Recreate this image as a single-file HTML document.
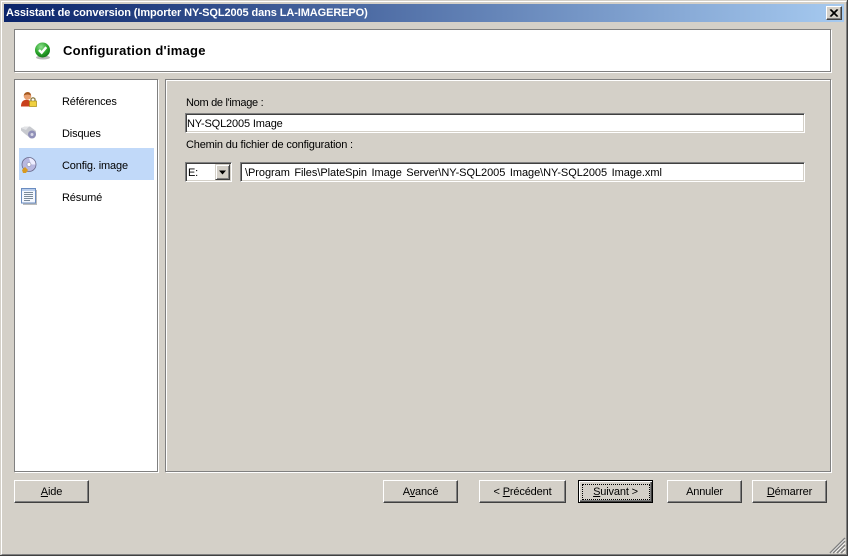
<!DOCTYPE html>
<html lang="fr"><head><meta charset="utf-8"><title>Assistant de conversion</title>
<style>
html,body{margin:0;padding:0;background:#d4d0c8}
#w{position:relative;width:848px;height:556px;overflow:hidden;background:#d4d0c8;font-family:"Liberation Sans",sans-serif;font-size:11px;letter-spacing:-.15px;color:#000}
#w div,#w span.t,#w svg{position:absolute}
.t{white-space:nowrap;line-height:14px}
.e1{border:1px solid #808080;box-sizing:border-box}
.e2{border:1px solid #fff;box-sizing:border-box}
.b{position:absolute;box-sizing:border-box;width:75px;height:23px;background:#d4d0c8;border-top:1px solid #fff;border-left:1px solid #fff;border-right:1px solid #404040;border-bottom:1px solid #404040;box-shadow:inset -1px -1px 0 #808080;text-align:center;line-height:22px;font-size:11px}
.f{box-sizing:border-box;background:#fff;border-top:1px solid #808080;border-left:1px solid #808080;border-right:1px solid #fff;border-bottom:1px solid #fff;box-shadow:inset 1px 1px 0 #404040,inset -1px -1px 0 #d4d0c8}
u{text-decoration:underline}
</style></head><body>
<div id="w">
<div style="left:0;top:0;width:848px;height:556px;box-sizing:border-box;border-right:1px solid #404040;border-bottom:1px solid #404040"></div>
<div style="left:1px;top:1px;width:846px;height:554px;box-sizing:border-box;border-top:1px solid #fff;border-left:1px solid #fff;border-right:1px solid #808080;border-bottom:1px solid #808080"></div>

<div style="left:4px;top:4px;width:840px;height:18px;background:linear-gradient(90deg,#0a246a,#a6caf0)"></div>
<span class="t" style="left:6px;top:6px;color:#fff;font-weight:bold;font-size:11px;letter-spacing:-.1px">Assistant de conversion (Importer NY-SQL2005 dans LA-IMAGEREPO)</span>
<div style="left:826px;top:6px;width:16px;height:14px;box-sizing:border-box;background:#d4d0c8;border-top:1px solid #fff;border-left:1px solid #fff;border-right:1px solid #404040;border-bottom:1px solid #404040;box-shadow:inset -1px -1px 0 #808080"></div>
<svg style="left:826px;top:6px" width="16" height="14"><path d="M4 3.500L11 10.500M5 3.500L12 10.500M11 3.500L4 10.500M12 3.500L5 10.500" stroke="#000" stroke-width="1" fill="none"/></svg>

<div class="e2" style="left:15px;top:30px;width:817px;height:43px"></div>
<div class="e1" style="left:14px;top:29px;width:817px;height:43px;background:#fff"></div>
<svg style="left:34px;top:42px" width="18" height="18" viewBox="0 0 18 18"><defs><radialGradient id="g" cx=".4" cy=".3" r=".8"><stop offset="0" stop-color="#8fe08f"/><stop offset=".55" stop-color="#2ba52b"/><stop offset="1" stop-color="#0c6a14"/></radialGradient></defs><ellipse cx="9" cy="15.500" rx="7" ry="2" fill="#bbb"/><circle cx="8.500" cy="8" r="7.500" fill="url(#g)"/><path d="M5 8L7.700 10.700L12.300 5.200" stroke="#fff" stroke-width="2.400" fill="none"/></svg>
<span class="t" style="left:63px;top:44px;font-weight:bold;font-size:13px;letter-spacing:.25px">Configuration d'image</span>

<div class="e2" style="left:15px;top:80px;width:144px;height:393px"></div>
<div class="e1" style="left:14px;top:79px;width:144px;height:393px;background:#fff"></div>
<div style="left:19px;top:148px;width:135px;height:32px;background:#c1d9f9"></div>

<svg style="left:20px;top:90px" width="18" height="18" viewBox="0 0 18 18"><circle cx="7.500" cy="6" r="3.800" fill="#e8a070"/><path d="M3.700 5.500Q4.500 2 8 2Q11 2.500 11 5.500Q7.500 3.500 3.700 5.500Z" fill="#a65a20"/><path d="M1 16.500Q1 10 6.500 9.800Q10 10 10.500 12V16.500Z" fill="#c8401c"/><rect x="9.500" y="11" width="7" height="5.500" fill="#f0d040" stroke="#a88a10" stroke-width=".7"/><path d="M11 11V9Q13 6.500 15 9V11" fill="none" stroke="#8a7a40" stroke-width="1.300"/></svg>
<span class="t" style="left:62px;top:95px">Références</span>

<svg style="left:20px;top:124px" width="18" height="18" viewBox="0 0 18 18"><path d="M1 4L5 2.500H10L16 7V11L11 14.500L5 10L1 6.500Z" fill="#c8cacf"/><path d="M1 4L5 2.500H9L6 6Z" fill="#e2e3e6"/><circle cx="12" cy="10.500" r="4" fill="#9090b8"/><circle cx="12" cy="10.500" r="1.500" fill="#d8d8e8"/></svg>
<span class="t" style="left:62px;top:127px">Disques</span>

<svg style="left:20px;top:156px" width="18" height="18" viewBox="0 0 18 18"><circle cx="9" cy="8.500" r="7" fill="#b8b8e0" stroke="#6a6a8a" stroke-width=".8"/><path d="M9 2A6.500 6.500 0 0 1 15.500 8.500H11Z" fill="#eeeeff"/><circle cx="9" cy="8.500" r="2" fill="#fff" stroke="#8888a8" stroke-width=".6"/><path d="M2 14L5 11L8 14L6 17H3Z" fill="#d89a20"/></svg>
<span class="t" style="left:62px;top:159px">Config. image</span>

<svg style="left:20px;top:187px" width="18" height="18" viewBox="0 0 18 18"><rect x="3" y="3" width="14" height="15" fill="#bbb"/><rect x="1.500" y="1.500" width="14" height="14.500" fill="#f4f8ff" stroke="#6a8cc0"/><rect x="2" y="2" width="13" height="2" fill="#b8cdec"/><path d="M4 5.500H13M4 7.500H13M4 9.500H13M4 11.500H13M4 13.500H10" stroke="#7a8a9a" stroke-width="1"/></svg>
<span class="t" style="left:62px;top:191px">Résumé</span>

<div class="e2" style="left:166px;top:80px;width:666px;height:393px"></div>
<div class="e1" style="left:165px;top:79px;width:666px;height:393px"></div>

<span class="t" style="left:186px;top:96px;letter-spacing:-.3px">Nom de l'image :</span>
<div class="f" style="left:185px;top:113px;width:620px;height:20px"></div>
<span class="t" style="left:187px;top:117px">NY-SQL2005 Image</span>
<span class="t" style="left:186px;top:138px;letter-spacing:-.17px">Chemin du fichier de configuration :</span>

<div class="f" style="left:185px;top:162px;width:47px;height:20px"></div>
<span class="t" style="left:188px;top:166px">E:</span>
<div style="left:215px;top:164px;width:15px;height:16px;box-sizing:border-box;background:#d4d0c8;border-top:1px solid #d4d0c8;border-left:1px solid #d4d0c8;border-right:1px solid #404040;border-bottom:1px solid #404040;box-shadow:inset 1px 1px 0 #fff,inset -1px -1px 0 #808080"></div>
<svg style="left:215px;top:164px" width="15" height="16"><path d="M4 6.500H11L7.500 10.500Z" fill="#000"/></svg>

<div class="f" style="left:240px;top:162px;width:565px;height:20px"></div>
<span class="t" style="left:245px;top:166px;word-spacing:1.500px;letter-spacing:-.05px">\Program Files\PlateSpin Image Server\NY-SQL2005 Image\NY-SQL2005 Image.xml</span>

<div class="b" style="left:14px;top:480px"><u>A</u>ide</div>
<div class="b" style="left:383px;top:480px">A<u>v</u>ancé</div>
<div class="b" style="left:479px;top:480px;width:87px">&lt; <u>P</u>récédent</div>
<div class="b" style="left:578px;top:480px;border:1px solid #000;box-shadow:inset 1px 1px 0 #fff,inset -1px -1px 0 #404040,inset -2px -2px 0 #808080"><u>S</u>uivant &gt;</div>
<div style="left:582px;top:484px;width:68px;height:16px;box-sizing:border-box;border:1px dotted #000"></div>
<div class="b" style="left:667px;top:480px">Annuler</div>
<div class="b" style="left:752px;top:480px"><u>D</u>émarrer</div>

<svg style="left:829px;top:537px" width="17" height="17"><path d="M16 1L1 16M16 4L4 16M16 8L8 16M16 12L12 16" stroke="#808080" stroke-width="1.500" fill="none"/><path d="M16 2.500L2.500 16M16 6L6 16M16 10L10 16M16 14L14 16" stroke="#fff" stroke-width=".8" fill="none"/></svg>
</div>
</body></html>
